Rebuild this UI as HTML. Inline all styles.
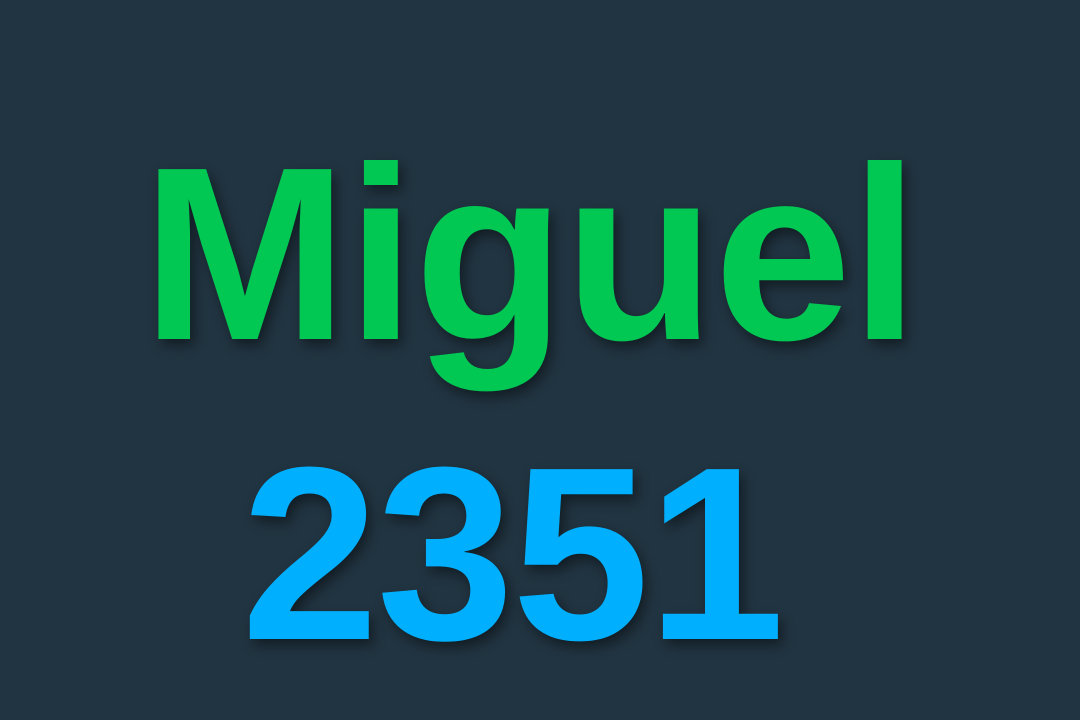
<!DOCTYPE html>
<html><head><style>
html,body{margin:0;padding:0;width:1080px;height:720px;overflow:hidden;background:#213441;}
.t{position:absolute;left:0;width:1080px;text-align:center;font-family:"Liberation Sans",sans-serif;font-weight:bold;font-size:247px;line-height:247px;text-shadow:4px 6px 12px rgba(0,0,0,0.45);}
#a{top:131px;color:#00c853;left:-10px;letter-spacing:-1px;}
#b{top:431px;color:#00b0ff;left:-28px;letter-spacing:-2px;}
</style></head><body>
<div class="t" id="a">Miguel</div>
<div class="t" id="b">2351</div>
</body></html>
